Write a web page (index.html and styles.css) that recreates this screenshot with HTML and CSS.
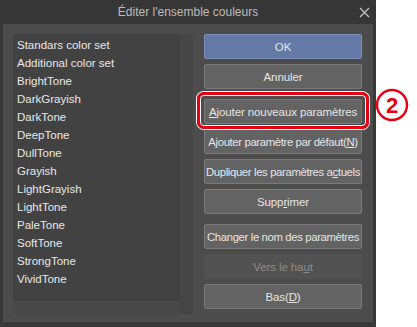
FILE: index.html
```html
<!DOCTYPE html>
<html>
<head>
    <title>Éditer l'ensemble couleurs</title>
    <link rel="stylesheet" href="styles.css">
</head>
<body>
    <div class="window">
        <div class="title-bar">
            <span class="title">Éditer l'ensemble couleurs</span>
            <svg class="close" width="11" height="11" viewBox="0 0 11 11">
                <path d="M1 1 L10 10 M10 1 L1 10" stroke="#c4c4c4" stroke-width="1.3"/>
            </svg>
        </div>

        <div class="panel">
            <div class="list-box">
                <ul class="set-list">
                    <li>Standars color set</li>
                    <li>Additional color set</li>
                    <li>BrightTone</li>
                    <li>DarkGrayish</li>
                    <li>DarkTone</li>
                    <li>DeepTone</li>
                    <li>DullTone</li>
                    <li>Grayish</li>
                    <li>LightGrayish</li>
                    <li>LightTone</li>
                    <li>PaleTone</li>
                    <li>SoftTone</li>
                    <li>StrongTone</li>
                    <li>VividTone</li>
                </ul>
                <div class="v-scroll"></div>
                <div class="h-scroll"></div>
                <div class="corner"></div>
            </div>

            <div class="buttons">
                <button class="btn btn-ok">OK</button>
                <button class="btn">Annuler</button>
                <button class="btn spaced"><u>A</u>jouter nouveaux paramètres</button>
                <button class="btn tight">Ajouter paramètre par défaut(<u>N</u>)</button>
                <button class="btn tight">Dupliquer les paramètres a<u>c</u>tuels</button>
                <button class="btn">Supp<u>r</u>imer</button>
                <button class="btn spaced tight">Chan<u>g</u>er le nom des paramètres</button>
                <button class="btn disabled">Vers le ha<u>u</u>t</button>
                <button class="btn">Bas(<u>D</u>)</button>
            </div>
        </div>
    </div>

    <!-- annotation drawn over the screenshot -->
    <div class="highlight"></div>
    <svg class="step" width="36" height="36" viewBox="0 0 36 36">
        <circle cx="18" cy="18" r="15" fill="#fff" stroke="#e60012" stroke-width="2.4"/>
        <text x="18" y="25.5" text-anchor="middle" class="step-num">2</text>
    </svg>
</body>
</html>
```

FILE: styles.css
```css
body {
    margin: 0;
    background-color: #fff;
    font-family: "Liberation Sans", Arial, sans-serif;
    position: relative;
    width: 417px;
    height: 327px;
    overflow: hidden;
}
.window {
    width: 376px;
    height: 327px;
    background-color: #393939;
    display: flex;
    flex-direction: column;
}
.title-bar {
    height: 24px;
    background-color: #363636;
    display: flex;
    align-items: center;
    justify-content: center;
    position: relative;
}
.title {
    color: #bcbcbc;
    font-size: 12px;
}
.close {
    position: absolute;
    right: 6px;
    top: 7px;
}
.panel {
    margin: 0 3px;
    height: 298px;
    background-color: #4c4c4c;
    display: flex;
    padding: 10px 11px 0 10px;
    box-sizing: border-box;
    gap: 11px;
}
.list-box {
    width: 180px;
    height: 280px;
    background-color: #424242;
    display: grid;
    grid-template-columns: 167px 13px;
    grid-template-rows: 267px 13px;
}
.set-list {
    list-style: none;
    margin: 0;
    padding: 2px 0 0 4px;
    color: #e8e8e8;
    font-size: 11.5px;
}
.set-list li {
    height: 18px;
    line-height: 18px;
    white-space: nowrap;
}
.v-scroll {
    background-color: #464646;
}
.h-scroll {
    background-color: #484848;
}
.corner {
    background-color: #454545;
}
.buttons {
    width: 158px;
    display: flex;
    flex-direction: column;
    gap: 5px;
}
.btn {
    height: 25px;
    padding: 0;
    background-color: #636363;
    border: 1px solid #7a7a7a;
    border-radius: 2px;
    color: #e6e6e6;
    font-family: "Liberation Sans", Arial, sans-serif;
    font-size: 11.5px;
    letter-spacing: -0.1px;
    white-space: nowrap;
    display: flex;
    align-items: center;
    justify-content: center;
}
.tight {
    letter-spacing: -0.35px;
    font-size: 11.3px;
}
.btn-ok {
    background-color: #6479a5;
    border-color: #7b8fb9;
}
.spaced {
    margin-top: 5px;
}
.disabled {
    background-color: #525252;
    border-color: #525252;
    color: #8c8c8c;
}
.highlight {
    position: absolute;
    left: 197px;
    top: 92px;
    width: 166px;
    height: 31px;
    border: 3px solid #e60012;
    border-radius: 7px;
    box-shadow: 0 0 0 1px #fff, inset 0 0 0 1px #fff;
}
.step {
    position: absolute;
    left: 374px;
    top: 87px;
}
.step-num {
    fill: #e60012;
    font-family: "Liberation Sans", Arial, sans-serif;
    font-size: 22px;
    font-weight: bold;
}
```
